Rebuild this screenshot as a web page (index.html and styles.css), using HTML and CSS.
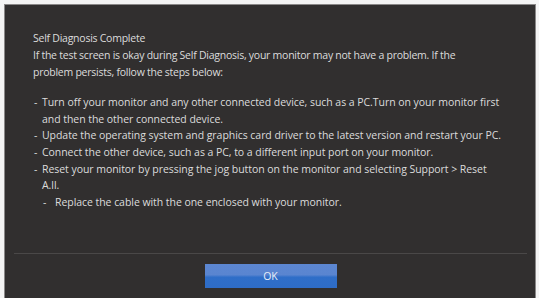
FILE: index.html
```html
<!DOCTYPE html>
<html>
<head>
<meta charset="utf-8">
<link rel="stylesheet" href="styles.css">
</head>
<body>
<div class="panel">
  <div class="content">
    <div class="line">Self Diagnosis Complete</div>
    <div class="line">If the test screen is okay during Self Diagnosis, your monitor may not have a problem. If the</div>
    <div class="line">problem persists, follow the steps below:</div>
    <div class="gap"></div>
    <div class="item"><span class="dash">-</span><span>Turn off your monitor and any other connected device, such as a PC.Turn on your monitor first</span></div>
    <div class="item"><span class="dash"></span><span>and then the other connected device.</span></div>
    <div class="item"><span class="dash">-</span><span>Update the operating system and graphics card driver to the latest version and restart your PC.</span></div>
    <div class="item"><span class="dash">-</span><span>Connect the other device, such as a PC, to a different input port on your monitor.</span></div>
    <div class="item"><span class="dash">-</span><span>Reset your monitor by pressing the jog button on the monitor and selecting Support &gt; Reset</span></div>
    <div class="item"><span class="dash"></span><span>A.ll.</span></div>
    <div class="item wide"><span class="dash">-</span><span>Replace the cable with the one enclosed with your monitor.</span></div>
  </div>
  <div class="footer">
    <button class="ok">OK</button>
  </div>
</div>
</body>
</html>
```
FILE: styles.css
```css
html, body {
  margin: 0;
  padding: 0;
  background: #f4f4f4;
}
body {
  width: 539px;
  height: 298px;
  overflow: hidden;
}
.panel {
  margin: 4px 3px 0 4px;
  height: 294px;
  box-sizing: border-box;
  background: #312f2f;
  border-left: 1px solid #8a8888;
  border-top: 1px solid #8a8888;
  border-right: 1px solid #8a8888;
  display: flex;
  flex-direction: column;
  font-family: "Open Sans", "Noto Sans", sans-serif;
  color: #dcdcdc;
  font-size: 10.5px;
}
.content {
  padding: 25px 0 0 28px;
  height: 226px;
  box-sizing: border-box;
}
.line, .item {
  height: 17px;
  line-height: 17px;
  white-space: nowrap;
  letter-spacing: -0.25px;
}
.item {
  display: flex;
  height: 16.7px;
  line-height: 16.7px;
  letter-spacing: -0.05px;
}
.gap {
  height: 13px;
}
.dash {
  width: 8px;
  padding-left: 1px;
  flex: none;
}
.item.wide .dash {
  width: 22px;
  padding-left: 10px;
  box-sizing: border-box;
}
.footer {
  margin: 22px 8px 0 9px;
  border-top: 1px solid #4a4848;
  display: flex;
  justify-content: center;
  padding-top: 10px;
}
.ok {
  width: 132px;
  height: 24px;
  margin-left: 0;
  border: none;
  background: linear-gradient(#5c87d2 0%, #5a85d0 45%, #2f6ec8 55%, #2e6cc6 100%);
  color: #e8eef8;
  font-family: "Open Sans", "Noto Sans", sans-serif;
  font-size: 10.5px;
  padding: 0;
}
```
